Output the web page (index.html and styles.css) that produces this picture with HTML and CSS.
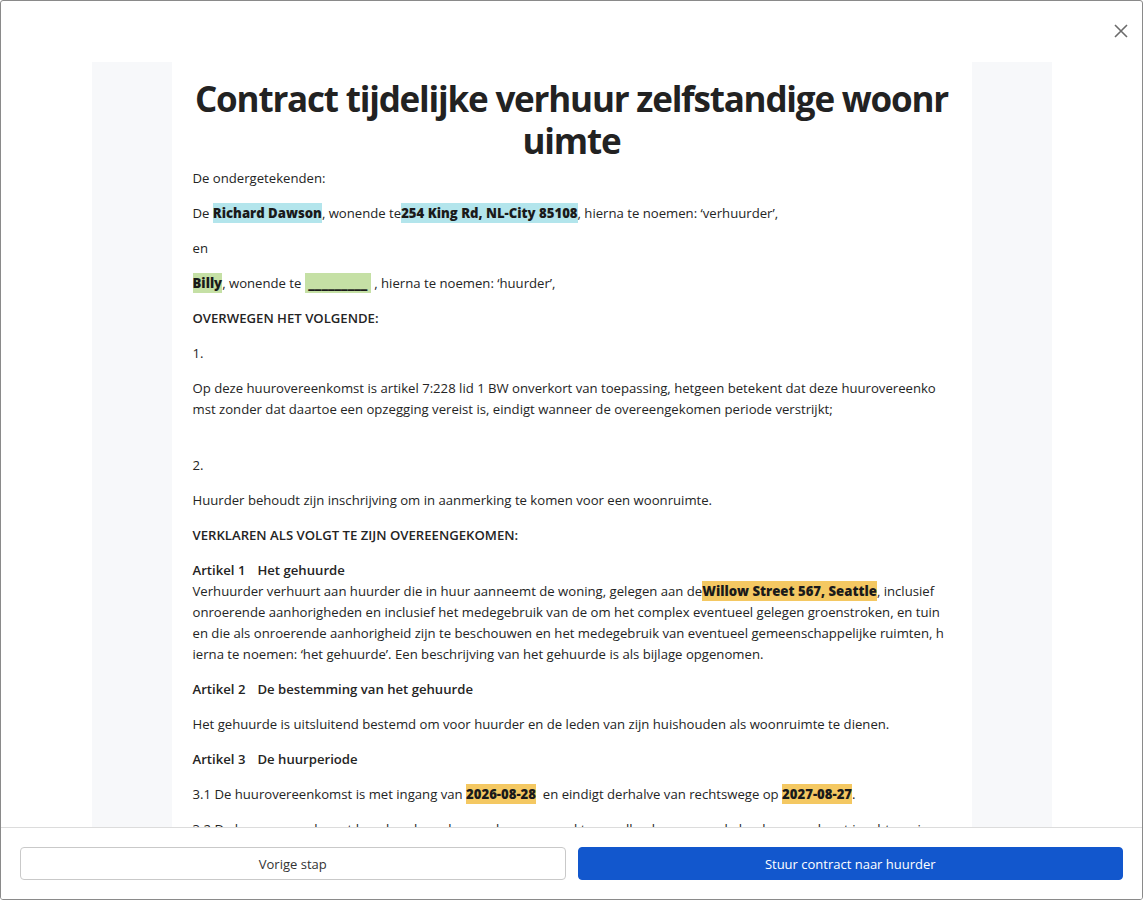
FILE: index.html
```html
<!DOCTYPE html>
<html lang="nl">
<head>
<meta charset="utf-8">
<title>Contract</title>
<link rel="stylesheet" href="styles.css">
</head>
<body>
<div class="modal">
  <div class="modal-scroll">
    <div class="modal-header">
      <button class="close" aria-label="Sluiten">
        <svg width="14" height="14" viewBox="0 0 14 14"><path d="M1 1L13 13M13 1L1 13" stroke="#6b6b6b" stroke-width="1.6" fill="none"/></svg>
      </button>
    </div>
    <div class="doc-bg">
      <article class="page">
        <h1 class="doc-title">Contract tijdelijke verhuur zelfstandige woonr<wbr>uimte</h1>
        <p>De ondergetekenden:</p>
        <p>De <mark class="hl hl-blue">Richard Dawson</mark>, wonende te<mark class="hl hl-blue">254 King Rd, NL-City 85108</mark>, hierna te noemen: ‘verhuurder’,</p>
        <p>en</p>
        <p><mark class="hl hl-green">Billy</mark>, wonende te <mark class="hl hl-green">&nbsp;_________&nbsp;</mark> , hierna te noemen: ‘huurder’,</p>
        <p class="sub">OVERWEGEN HET VOLGENDE:</p>
        <p>1.</p>
        <p>Op deze huurovereenkomst is artikel 7:228 lid 1 BW onverkort van toepassing, hetgeen betekent dat deze huurovereenko<wbr>mst zonder dat daartoe een opzegging vereist is, eindigt wanneer de overeengekomen periode verstrijkt;<br><br></p>
        <p>2.</p>
        <p>Huurder behoudt zijn inschrijving om in aanmerking te komen voor een woonruimte.</p>
        <p class="sub">VERKLAREN ALS VOLGT TE ZIJN OVEREENGEKOMEN:</p>
        <p><span class="sub">Artikel 1<span class="tab"></span>Het gehuurde</span><br>Verhuurder verhuurt aan huurder die in huur aanneemt de woning, gelegen aan de<mark class="hl hl-yellow">Willow Street 567, Seattle</mark>, inclusief onroerende aanhorigheden en inclusief het medegebruik van de om het complex eventueel gelegen groenstroken, en tuin en die als onroerende aanhorigheid zijn te beschouwen en het medegebruik van eventueel gemeenschappelijke ruimten, h<wbr>ierna te noemen: ‘het gehuurde’. Een beschrijving van het gehuurde is als bijlage opgenomen.</p>
        <p class="sub">Artikel 2<span class="tab"></span>De bestemming van het gehuurde</p>
        <p>Het gehuurde is uitsluitend bestemd om voor huurder en de leden van zijn huishouden als woonruimte te dienen.</p>
        <p class="sub">Artikel 3<span class="tab"></span>De huurperiode</p>
        <p>3.1 De huurovereenkomst is met ingang van <mark class="hl hl-yellow">2026-08-28</mark>&nbsp; en eindigt derhalve van rechtswege op <mark class="hl hl-yellow">2027-08-27</mark>.</p>
        <p>3.2 De huurovereenkomst kan door huurder worden opgezegd tegen elke dag van een kalendermaand met inachtneming van een opzegtermijn.</p>
        <p>3.3 Verhuurder kan de huurovereenkomst opzeggen met inachtneming van de wettelijke bepalingen.</p>
      </article>
    </div>
  </div>
  <footer class="modal-footer">
    <button class="btn btn-secondary">Vorige stap</button>
    <button class="btn btn-primary">Stuur contract naar huurder</button>
  </footer>
</div>
</body>
</html>
```
FILE: styles.css
```css
html, body {
  margin: 0;
  padding: 0;
  height: 100%;
  background: #ffffff;
}
body {
  font-family: "Open Sans", "Noto Sans", "Liberation Sans", sans-serif;
  color: #242424;
}
.modal {
  box-sizing: border-box;
  height: 100vh;
  border: 1px solid #8a8a8a;
  border-radius: 3px;
  display: flex;
  flex-direction: column;
  background: #fff;
  overflow: hidden;
}
.modal-scroll {
  flex: 1;
  overflow: hidden;
  min-height: 0;
}
.modal-header {
  height: 61px;
  display: flex;
  justify-content: flex-end;
  align-items: flex-start;
  padding: 22px 13px 0 0;
  box-sizing: border-box;
}
.close {
  border: 0;
  background: none;
  padding: 0;
  width: 16px;
  height: 16px;
  display: flex;
  align-items: center;
  justify-content: center;
  cursor: pointer;
}
.doc-bg {
  width: 960px;
  margin: 0 auto;
  padding: 0 80px;
  box-sizing: border-box;
  background: #f7f8fa;
}
.page {
  background: #fff;
  padding: 16px 21px 40px;
  font-size: 13.15px;
  line-height: 21px;
}
.doc-title {
  margin: 0 0 6px;
  font-size: 35px;
  line-height: 42px;
  letter-spacing: -1.2px;
  font-weight: 700;
  text-align: center;
  color: #222;
}
.page p {
  margin: 0 0 14px;
}
.sub {
  font-weight: 600;
}
.tab {
  display: inline-block;
  width: 12px;
}
.hl {
  font-weight: 800;
  color: #1a1a1a;
  padding: 1px 0 1px;
}
.hl-blue { background: #b3e5ec; }
.hl-green { background: #c5e0a5; }
.hl-yellow { background: #f4c862; }
.modal-footer {
  border-top: 1px solid #dcdcdc;
  padding: 19px 19px 19px;
  display: flex;
  gap: 12px;
  background: #fff;
}
.btn {
  flex: 1;
  height: 33px;
  border-radius: 4px;
  font-family: "Open Sans", "Noto Sans", "Liberation Sans", sans-serif;
  font-size: 13px;
  cursor: pointer;
}
.btn-secondary {
  background: #fff;
  border: 1px solid #c9c9c9;
  color: #333;
}
.btn-primary {
  background: #1257cd;
  border: 1px solid #1257cd;
  color: #fff;
}
```
